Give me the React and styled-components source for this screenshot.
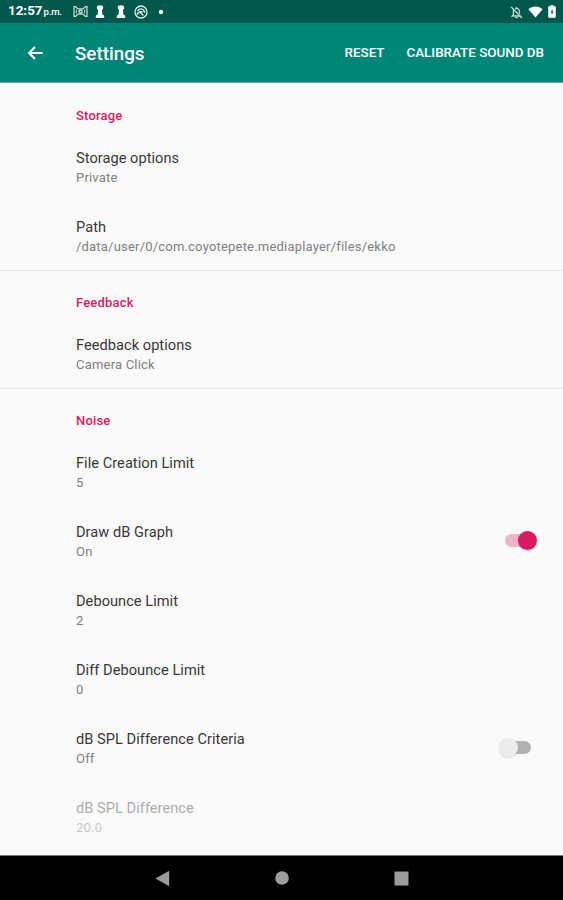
import React, { useState } from "react";
import styled, { createGlobalStyle } from "styled-components";

const GlobalStyle = createGlobalStyle`
  * {
    box-sizing: border-box;
  }
  body {
    margin: 0;
    background: #fafafa;
    font-family: Roboto, "Liberation Sans", sans-serif;
  }
`;

const Screen = styled.div`
  display: flex;
  flex-direction: column;
  width: 563px;
  height: 900px;
  overflow: hidden;
  background: #fafafa;
`;

const StatusBar = styled.div`
  display: flex;
  flex: none;
  align-items: center;
  justify-content: space-between;
  height: 23px;
  padding: 0 7px 0 8px;
  background: #00574b;
  color: #ffffff;
`;

const StatusGroup = styled.div`
  display: flex;
  align-items: center;
  gap: ${(props) => props.$gap};

  svg {
    display: block;
  }
`;

const Clock = styled.span`
  width: 57px;
  font-size: 13.4px;
  font-weight: 700;
  line-height: 24px;
  white-space: nowrap;

  small {
    margin-left: 1px;
    font-size: 9.6px;
    font-weight: 500;
    letter-spacing: -0.2px;
  }
`;

const Toolbar = styled.header`
  display: flex;
  flex: none;
  align-items: center;
  height: 60px;
  padding: 0 19px 0 27px;
  border-bottom: 1px solid #6fa59e;
  background: #008577;
  color: #ffffff;
`;

const BackButton = styled.button`
  display: flex;
  width: 48px;
  padding: 0;
  border: 0;
  background: none;
  color: inherit;
`;

const Title = styled.h1`
  flex: 1;
  margin: 0;
  padding-top: 2px;
  font-size: 18.8px;
  font-weight: 500;
  line-height: 24px;
`;

const Action = styled.button`
  margin-left: 22px;
  padding: 1px 0 0;
  border: 0;
  background: none;
  color: inherit;
  font-family: inherit;
  font-size: 13.4px;
  font-weight: 500;
  line-height: 20px;
`;

const List = styled.main`
  flex: 1;
  min-height: 0;
  overflow: hidden;
`;

const Section = styled.section`
  & + & {
    box-shadow: inset 0 1px 0 #e6e6e6;
  }
`;

const SectionTitle = styled.h2`
  height: 49px;
  margin: 0;
  padding: 23px 0 0 76px;
  color: #d81b60;
  font-size: 13px;
  font-weight: 500;
  line-height: 20px;
  letter-spacing: 0.18px;
`;

const Row = styled.div`
  display: flex;
  align-items: flex-start;
  justify-content: space-between;
  height: 69px;
  padding: 16px 24px 0 76px;
  opacity: ${(props) => (props.$disabled ? 0.4 : 1)};
`;

const RowTitle = styled.div`
  color: #383838;
  font-size: 14.6px;
  line-height: 20px;
  letter-spacing: 0.04px;
`;

const Summary = styled.div`
  color: #808080;
  font-size: 13px;
  line-height: 19px;
  letter-spacing: 0.2px;
`;

const Track = styled.button`
  display: flex;
  align-items: center;
  justify-content: ${(props) => (props.$on ? "flex-end" : "flex-start")};
  width: ${(props) => (props.$on ? "31px" : "28px")};
  height: 13px;
  margin: 12px ${(props) => (props.$on ? "3px" : "8px")} 0 0;
  padding: 0;
  border: 0;
  border-radius: 7px;
  background: ${(props) => (props.$on ? "#f1b3c9" : "#b2b2b2")};
`;

const Thumb = styled.span`
  flex: none;
  width: 19px;
  height: 19px;
  margin: ${(props) => (props.$on ? "0 -1px 0 0" : "0 0 0 -4px")};
  border-radius: 50%;
  background: ${(props) => (props.$on ? "#d81b60" : "#ececec")};
  box-shadow: 0 1px 2px rgba(0, 0, 0, 0.14);
`;

const NavBar = styled.nav`
  display: flex;
  flex: none;
  align-items: center;
  justify-content: center;
  gap: 105px;
  height: 45px;
  border-top: 1px solid #777777;
  background: #000000;

  svg {
    display: block;
  }
`;

const sections = [
  {
    title: "Storage",
    items: [
      { title: "Storage options", summary: "Private" },
      {
        title: "Path",
        summary: "/data/user/0/com.coyotepete.mediaplayer/files/ekko",
      },
    ],
  },
  {
    title: "Feedback",
    items: [{ title: "Feedback options", summary: "Camera Click" }],
  },
  {
    title: "Noise",
    items: [
      { title: "File Creation Limit", summary: "5" },
      { title: "Draw dB Graph", toggle: true, on: true },
      { title: "Debounce Limit", summary: "2" },
      { title: "Diff Debounce Limit", summary: "0" },
      { title: "dB SPL Difference Criteria", toggle: true, on: false },
      { title: "dB SPL Difference", summary: "20.0", disabled: true },
    ],
  },
];

function BowIcon() {
  return (
    <svg width="15" height="13" viewBox="0 0 15 13" fill="none" stroke="#c9dfdb">
      <path d="M1 1.7 L2.6 1.7 L5 3.9 H10 L12.4 1.7 H14 V11.3 H12.4 L10 9.1 H5 L2.6 11.3 H1 Z" strokeWidth="1.2" />
      <path d="M3.3 4.6 V8.4 M11.7 4.6 V8.4" strokeWidth="1" />
      <circle cx="7.5" cy="6.5" r="1.5" strokeWidth="1.4" />
    </svg>
  );
}

function PawnIcon() {
  return (
    <svg width="10" height="13" viewBox="0 0 10 13" fill="#ffffff">
      <path d="M1.8 2.6 Q1.8 0.2 5 0.2 Q8.2 0.2 8.2 2.6 Q8.2 4.2 7 5 L7.3 9.4 L9.2 10.6 V12.9 H0.8 V10.6 L2.7 9.4 L3 5 Q1.8 4.2 1.8 2.6 Z" />
    </svg>
  );
}

function SyncIcon() {
  return (
    <svg width="14" height="14" viewBox="0 0 14 14" fill="none" stroke="#dcebe8">
      <circle cx="7" cy="7" r="6" strokeWidth="1.3" />
      <path d="M3.6 6 C4.8 3.4 8.4 3.2 9.7 5.4 L10.8 7.6" strokeWidth="1.4" />
      <path d="M2.6 9.6 L5.6 6.8 L9.4 10.6 M5.6 6.8 H8.6" strokeWidth="1.4" />
    </svg>
  );
}

function BellOffIcon() {
  return (
    <svg width="13" height="14" viewBox="0 0 13 14" fill="none" stroke="#c6dbd7">
      <path d="M3.4 5 V9.8 L2.2 11 H10.6 M5 3.8 C7.2 2.7 9.4 4 9.4 6.4 V8.8" strokeWidth="1.3" />
      <path d="M6.5 2 V3.4 M5.4 12.6 H7.6" strokeWidth="1.4" />
      <path d="M1.2 2 L12 13" strokeWidth="1.3" />
    </svg>
  );
}

function WifiIcon() {
  return (
    <svg width="15" height="12" viewBox="0 0 15 12" fill="#ffffff">
      <path d="M7.5 11.6 L0.4 3.2 C4.4 -0.4 10.6 -0.4 14.6 3.2 Z" />
    </svg>
  );
}

function BatteryIcon() {
  return (
    <svg width="8" height="13" viewBox="0 0 8 13">
      <path d="M2.5 0 H5.5 V1.3 H7 Q7.8 1.3 7.8 2.1 V12 Q7.8 12.8 7 12.8 H1 Q0.2 12.8 0.2 12 V2.1 Q0.2 1.3 1 1.3 H2.5 Z" fill="#ffffff" />
      <path d="M4.5 3.8 L2.6 7.4 H3.7 V10 L5.4 6.6 H4.5 Z" fill="#00574b" />
    </svg>
  );
}

function SettingRow({ item }) {
  const [on, setOn] = useState(item.on);
  return (
    <Row $disabled={item.disabled}>
      <div>
        <RowTitle>{item.title}</RowTitle>
        <Summary>{item.toggle ? (on ? "On" : "Off") : item.summary}</Summary>
      </div>
      {item.toggle && (
        <Track $on={on} onClick={() => setOn(!on)} aria-label={item.title}>
          <Thumb $on={on} />
        </Track>
      )}
    </Row>
  );
}

function App() {
  return (
    <Screen>
      <GlobalStyle />
      <StatusBar>
        <StatusGroup $gap="8px">
          <Clock>
            12:57<small>p.m.</small>
          </Clock>
          <StatusGroup $gap="7px">
            <BowIcon />
            <StatusGroup $gap="11px">
              <PawnIcon />
              <PawnIcon />
            </StatusGroup>
          </StatusGroup>
          <SyncIcon />
          <svg width="14" height="6" viewBox="0 0 14 6">
            <circle cx="5" cy="3" r="2.2" fill="#ffffff" />
          </svg>
        </StatusGroup>
        <StatusGroup $gap="5px">
          <BellOffIcon />
          <WifiIcon />
          <BatteryIcon />
        </StatusGroup>
      </StatusBar>
      <Toolbar>
        <BackButton aria-label="Back">
          <svg width="16" height="16" viewBox="0 0 16 16" fill="none" stroke="#ffffff" strokeWidth="2">
            <path d="M15.6 8 H2.4 M8 2 L2 8 L8 14" />
          </svg>
        </BackButton>
        <Title>Settings</Title>
        <Action>RESET</Action>
        <Action>CALIBRATE SOUND DB</Action>
      </Toolbar>
      <List>
        {sections.map((section) => (
          <Section key={section.title}>
            <SectionTitle>{section.title}</SectionTitle>
            {section.items.map((item) => (
              <SettingRow key={item.title} item={item} />
            ))}
          </Section>
        ))}
      </List>
      <NavBar>
        <svg width="15" height="17" viewBox="0 0 15 17">
          <path d="M14.2 0.8 V16.2 L0.5 8.5 Z" fill="#9c9c9c" />
        </svg>
        <svg width="14" height="14" viewBox="0 0 14 14">
          <circle cx="7" cy="7" r="6.8" fill="#9c9c9c" />
        </svg>
        <svg width="15" height="15" viewBox="0 0 15 15">
          <rect x="0.5" y="0.5" width="14" height="14" fill="#9c9c9c" />
        </svg>
      </NavBar>
    </Screen>
  );
}

export default App;
